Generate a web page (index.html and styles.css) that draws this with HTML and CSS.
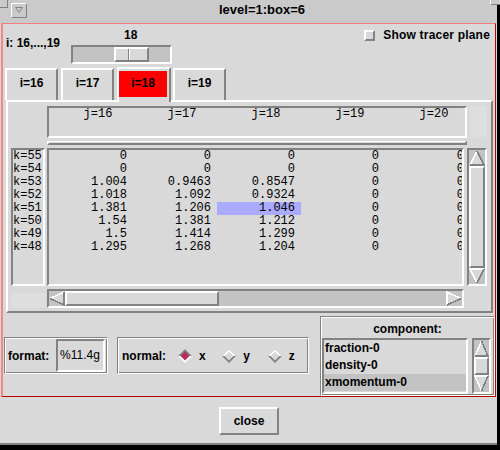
FILE: index.html
```html
<!DOCTYPE html>
<html>
<head>
<meta charset="utf-8">
<title>level=1:box=6</title>
<link rel="stylesheet" href="styles.css">
</head>
<body>
<div class="window">
  <span class="corner corner-tl"></span>
  <span class="corner corner-tr"></span>
  <div class="titlebar">
    <div class="menu-btn">
      <svg width="8" height="6" viewBox="0 0 8 6"><polygon points="0.5,0.5 7.5,0.5 4,5.5" fill="none" stroke="#828282" stroke-width="1"/></svg>
    </div>
    <div class="title">level=1:box=6</div>
  </div>
  <div class="frame">
    <div class="topbar">
      <div class="ilabel">i: 16,...,19</div>
      <div class="scale">
        <div class="scale-value">18</div>
        <div class="trough"><div class="slider"><span class="slider-groove"></span></div></div>
      </div>
      <div class="check"><span class="check-box"></span>Show tracer plane</div>
    </div>
    <div class="tabs">
      <div class="tab">i=16</div>
      <div class="tab">i=17</div>
      <div class="tab tab-sel"><span class="tab-red">i=18</span></div>
      <div class="tab">i=19</div>
    </div>
    <div class="panel">
      <div class="hdr-row">
        <div class="hdr mono"><span>j=16</span><span>j=17</span><span>j=18</span><span>j=19</span><span>j=20</span></div>
        <div class="blank blank-tr"></div>
      </div>
      <div class="sep"></div>
      <div class="body-row">
        <div class="rowlabels mono">
          <div>k=55</div><div>k=54</div><div>k=53</div><div>k=52</div><div>k=51</div><div>k=50</div><div>k=49</div><div>k=48</div>
        </div>
        <div class="data">
          <div class="grid mono">
            <span>0</span><span>0</span><span>0</span><span>0</span><span>0</span>
            <span>0</span><span>0</span><span>0</span><span>0</span><span>0</span>
            <span>1.004</span><span>0.9463</span><span>0.8547</span><span>0</span><span>0</span>
            <span>1.018</span><span>1.092</span><span>0.9324</span><span>0</span><span>0</span>
            <span>1.381</span><span>1.206</span><span class="hl">1.046</span><span>0</span><span>0</span>
            <span>1.54</span><span>1.381</span><span>1.212</span><span>0</span><span>0</span>
            <span>1.5</span><span>1.414</span><span>1.299</span><span>0</span><span>0</span>
            <span>1.295</span><span>1.268</span><span>1.204</span><span>0</span><span>0</span>
          </div>
        </div>
        <div class="vscroll">
          <svg class="arr-v" viewBox="0 0 16 16" preserveAspectRatio="none" shape-rendering="crispEdges"><polygon points="8,1 15,15 1,15" fill="#d9d9d9"/><polyline points="1,15 8,1" fill="none" stroke="#fff" stroke-width="1.6"/><polyline points="8,1 15,15 1,15" fill="none" stroke="#828282" stroke-width="1.6"/></svg>
          <div class="vthumb"></div>
          <svg class="arr-v" viewBox="0 0 16 16" preserveAspectRatio="none" shape-rendering="crispEdges"><polygon points="1,1 15,1 8,15" fill="#d9d9d9"/><polyline points="8,15 1,1 15,1" fill="none" stroke="#fff" stroke-width="1.6"/><polyline points="15,1 8,15" fill="none" stroke="#828282" stroke-width="1.6"/></svg>
        </div>
      </div>
      <div class="hs-row">
        <div class="blank blank-bl"></div>
        <div class="hscroll">
          <svg class="arr-h" viewBox="0 0 16 15" preserveAspectRatio="none" shape-rendering="crispEdges"><polygon points="1,7.5 15,1 15,14" fill="#d9d9d9"/><polyline points="1,7.5 15,1" fill="none" stroke="#fff" stroke-width="1.6"/><polyline points="15,1 15,14 1,7.5" fill="none" stroke="#828282" stroke-width="1.6"/></svg>
          <div class="hthumb"></div>
          <svg class="arr-h arr-right" viewBox="0 0 16 15" preserveAspectRatio="none" shape-rendering="crispEdges"><polygon points="1,1 15,7.5 1,14" fill="#d9d9d9"/><polyline points="1,14 1,1 15,7.5" fill="none" stroke="#fff" stroke-width="1.6"/><polyline points="15,7.5 1,14" fill="none" stroke="#828282" stroke-width="1.6"/></svg>
        </div>
      </div>
    </div>
    <div class="bottom">
      <div class="group fmt">
        <span class="fmt-label">format:</span>
        <div class="entry">%11.4g</div>
      </div>
      <div class="group normal">
        <span class="normal-label">normal:</span>
        <div class="radio">
          <svg class="diamond" viewBox="0 0 14 14"><polygon points="0,7 7,0 14,7 7,14" fill="#fff"/><polygon points="0,7 7,0 14,7" fill="#828282"/><polygon points="7,2.5 11.5,7 7,11.5 2.5,7" fill="#b03060"/></svg>
          <span>x</span>
        </div>
        <div class="radio">
          <svg class="diamond" viewBox="0 0 14 14"><polygon points="0,7 7,0 14,7 7,14" fill="#828282"/><polygon points="0,7 7,0 14,7" fill="#fff"/><polygon points="7,2.5 11.5,7 7,11.5 2.5,7" fill="#d9d9d9"/></svg>
          <span>y</span>
        </div>
        <div class="radio radio-last">
          <svg class="diamond" viewBox="0 0 14 14"><polygon points="0,7 7,0 14,7 7,14" fill="#828282"/><polygon points="0,7 7,0 14,7" fill="#fff"/><polygon points="7,2.5 11.5,7 7,11.5 2.5,7" fill="#d9d9d9"/></svg>
          <span>z</span>
        </div>
      </div>
      <div class="group comp">
        <div class="comp-title">component:</div>
        <div class="comp-body">
          <div class="listbox">
            <div class="li">fraction-0</div>
            <div class="li">density-0</div>
            <div class="li sel">xmomentum-0</div>
          </div>
          <div class="lscroll">
            <svg class="arr-l" viewBox="0 0 15 17" preserveAspectRatio="none" shape-rendering="crispEdges"><polygon points="7.5,1 14,16 1,16" fill="#d9d9d9"/><polyline points="1,16 7.5,1" fill="none" stroke="#fff" stroke-width="1.6"/><polyline points="7.5,1 14,16 1,16" fill="none" stroke="#828282" stroke-width="1.6"/></svg>
            <div class="lthumb"></div>
            <svg class="arr-l" viewBox="0 0 15 17" preserveAspectRatio="none" shape-rendering="crispEdges"><polygon points="1,1 14,1 7.5,16" fill="#d9d9d9"/><polyline points="7.5,16 1,1 14,1" fill="none" stroke="#fff" stroke-width="1.6"/><polyline points="14,1 7.5,16" fill="none" stroke="#828282" stroke-width="1.6"/></svg>
          </div>
        </div>
      </div>
    </div>
  </div>
  <div class="footer">
    <button class="close" type="button">close</button>
  </div>
</div>
</body>
</html>
```

FILE: styles.css
```css
* { box-sizing: border-box; }

body {
  margin: 0;
  width: 500px;
  height: 450px;
  overflow: hidden;
  background: #000;
  font-family: "Liberation Sans", Arial, sans-serif;
  font-size: 12px;
  font-weight: bold;
  color: #000;
}

.window {
  position: relative;
  width: 497px;
  height: 445px;
  background: #d9d9d9;
  border-bottom: 2px solid #828282;
}

.corner { position: absolute; display: block; }
.corner-tl {
  left: 0; top: 0; width: 8px; height: 8px;
  border-right: 1px solid #828282;
  border-bottom: 1px solid #828282;
}
.corner-tr {
  left: 490px; top: 0; width: 10px; height: 5px;
  background: #cacaca;
  border-left: 1px solid #fff;
  border-bottom: 1px solid #828282;
}

.titlebar {
  display: flex;
  align-items: flex-start;
  height: 23px;
  background: #cacaca;
}
.menu-btn {
  margin: 3px 0 0 11px;
  width: 16px;
  height: 15px;
  border: 1px solid;
  border-color: #fff #828282 #828282 #fff;
  display: flex;
  justify-content: center;
  padding-top: 3px;
}
.menu-btn svg { display: block; }
.title {
  flex: 1;
  text-align: center;
  font-size: 13px;
  line-height: 15px;
  padding-top: 2px;
}

.frame {
  margin-left: 1px;
  width: 495px;
  height: 374px;
  border-style: solid;
  border-width: 1px 1px 1px 2px;
  border-color: #f08080 #b80000 #b80000 #f08888;
  display: flex;
  flex-direction: column;
}

.hdr, .rowlabels, .data, .vscroll, .hscroll, .trough, .entry, .listbox, .lscroll {
  border: 2px solid;
  border-color: #828282 #fff #fff #828282;
}

/* top bar */
.topbar { display: flex; height: 43px; flex: none; }
.ilabel { width: 68px; padding: 12px 0 0 3px; line-height: 14px; }
.scale { width: 101px; padding-top: 4px; }
.scale-value { height: 17px; line-height: 14px; padding-left: 53px; }
.trough { height: 19px; background: #c3c3c3; display: flex; }
.slider {
  margin-left: 41px;
  width: 35px;
  border: 2px solid;
  border-color: #fff #828282 #828282 #fff;
  background: #d9d9d9;
  display: flex;
  padding-left: 12px;
}
.slider-groove {
  width: 2px;
  border-left: 1px solid #828282;
  border-right: 1px solid #fff;
}
.check {
  margin-left: auto;
  margin-right: 5px;
  padding-top: 4px;
  display: flex;
  align-items: flex-start;
  line-height: 14px;
  letter-spacing: 0.2px;
}
.check-box {
  width: 11px;
  height: 11px;
  margin: 2px 8px 0 0;
  border: 2px solid;
  border-color: #fff #828282 #828282 #fff;
  background: #d9d9d9;
}

/* tabs */
.tabs {
  display: flex;
  align-items: flex-end;
  height: 33px;
  padding-left: 2px;
  flex: none;
}
.tab {
  width: 53px;
  height: 32px;
  margin-right: 3px;
  border-style: solid;
  border-width: 2px 2px 0 2px;
  border-color: #fff #828282 #fff #fff;
  text-align: center;
  padding-top: 6px;
  line-height: 14px;
  background: #d9d9d9;
}
.tab-sel {
  position: relative;
  width: 54px;
  height: 35px;
  margin-right: 2px;
  margin-bottom: -2px;
  padding: 2px 2px 0 0;
}
.tab-red {
  display: block;
  height: 26px;
  background: #ff0000;
  padding-top: 5px;
  line-height: 14px;
}

/* panel */
.panel {
  margin-left: 3px;
  width: 487px;
  height: 213px;
  flex: none;
  border: 2px solid;
  border-color: #fff #828282 #828282 #fff;
}
.mono {
  font-family: "Liberation Mono", "Courier New", monospace;
  font-weight: normal;
  font-size: 12px;
  line-height: 13px;
}
.hdr-row { display: flex; height: 32px; margin: 4px 0 0 39px; }
.hdr {
  width: 420px;
  display: flex;
  padding-left: 7px;
  overflow: hidden;
}
.hdr span { flex: none; width: 84px; text-align: center; }
.blank { background: #dedede; }
.blank-tr { width: 17px; height: 31px; margin-left: 3px; }
.sep {
  width: 420px;
  height: 4px;
  margin: 3px 0 0 39px;
  border-style: solid;
  border-width: 1px 2px 2px 2px;
  border-color: #fff #828282 #828282 #fff;
}
.body-row { display: flex; height: 138px; margin-top: 3px; }
.rowlabels { width: 34px; margin-left: 3px; overflow: hidden; }
.data { width: 417px; margin-left: 2px; overflow: hidden; }
.grid {
  display: grid;
  grid-template-columns: repeat(5, 84px);
  width: 420px;
}
.grid span { height: 13px; text-align: right; padding-right: 6px; white-space: nowrap; }
.grid span:nth-child(5n) { padding-right: 5px; }
.grid .hl { background: #aaaaff; }
.vscroll {
  width: 20px;
  margin-left: 3px;
  background: #c3c3c3;
  display: flex;
  flex-direction: column;
}
.arr-v { display: block; width: 16px; height: 16px; flex: none; }
.vthumb {
  height: 102px;
  flex: none;
  border: 2px solid;
  border-color: #fff #828282 #828282 #fff;
  background: #d9d9d9;
}
.hs-row { display: flex; height: 19px; margin-top: 3px; }
.blank-bl { width: 35px; height: 15px; margin-left: 3px; align-self: flex-end; }
.hscroll {
  width: 417px;
  margin-left: 1px;
  background: #c3c3c3;
  display: flex;
}
.arr-h { display: block; width: 16px; height: 15px; flex: none; }
.arr-right { margin-left: auto; }
.hthumb {
  width: 154px;
  border: 2px solid;
  border-color: #fff #828282 #828282 #fff;
  background: #d9d9d9;
}

/* bottom */
.bottom { display: flex; align-items: flex-start; height: 83px; flex: none; }
.group {
  border: 1px solid;
  border-color: #828282 #fff #fff #828282;
  box-shadow: inset 1px 1px 0 #fff, inset -1px -1px 0 #828282;
  padding: 1px;
}
.fmt {
  width: 104px;
  height: 37px;
  margin: 24px 0 0 1px;
  display: flex;
  align-items: center;
}
.fmt-label { padding-left: 2px; }
.entry {
  margin-left: auto;
  margin-right: 1px;
  width: 49px;
  height: 33px;
  padding-left: 2px;
  font-weight: normal;
  line-height: 28px;
  background: #d9d9d9;
}
.normal {
  width: 192px;
  height: 37px;
  margin: 24px 0 0 9px;
  display: flex;
  align-items: center;
}
.normal-label { width: 60px; padding-left: 3px; }
.radio { display: flex; align-items: center; width: 45px; }
.radio-last { width: 40px; margin-left: 1px; }
.diamond { display: block; width: 14px; height: 14px; margin-right: 7px; }
.comp {
  width: 175px;
  height: 80px;
  margin-left: 11px;
  align-self: flex-end;
  display: flex;
  flex-direction: column;
}
.comp-title { height: 20px; padding-top: 4px; line-height: 14px; text-align: center; }
.comp-body { display: flex; height: 56px; }
.listbox { width: 146px; overflow: hidden; }
.li { height: 17px; line-height: 14px; padding: 1px 0 0 1px; white-space: nowrap; }
.li.sel { background: #c3c3c3; }
.lscroll {
  width: 19px;
  margin-left: 4px;
  background: #c3c3c3;
  display: flex;
  flex-direction: column;
}
.arr-l { display: block; width: 15px; height: 17px; flex: none; }
.lthumb {
  height: 18px;
  flex: none;
  border: 2px solid;
  border-color: #fff #828282 #828282 #fff;
  background: #d9d9d9;
}

/* footer */
.footer { display: flex; justify-content: center; padding: 10px 0 0 1px; }
.close {
  width: 60px;
  height: 28px;
  padding: 0;
  border: 2px solid;
  border-color: #fff #828282 #828282 #fff;
  background: #d9d9d9;
  font-family: "Liberation Sans", Arial, sans-serif;
  font-size: 12px;
  font-weight: bold;
  line-height: 14px;
  color: #000;
}
```
